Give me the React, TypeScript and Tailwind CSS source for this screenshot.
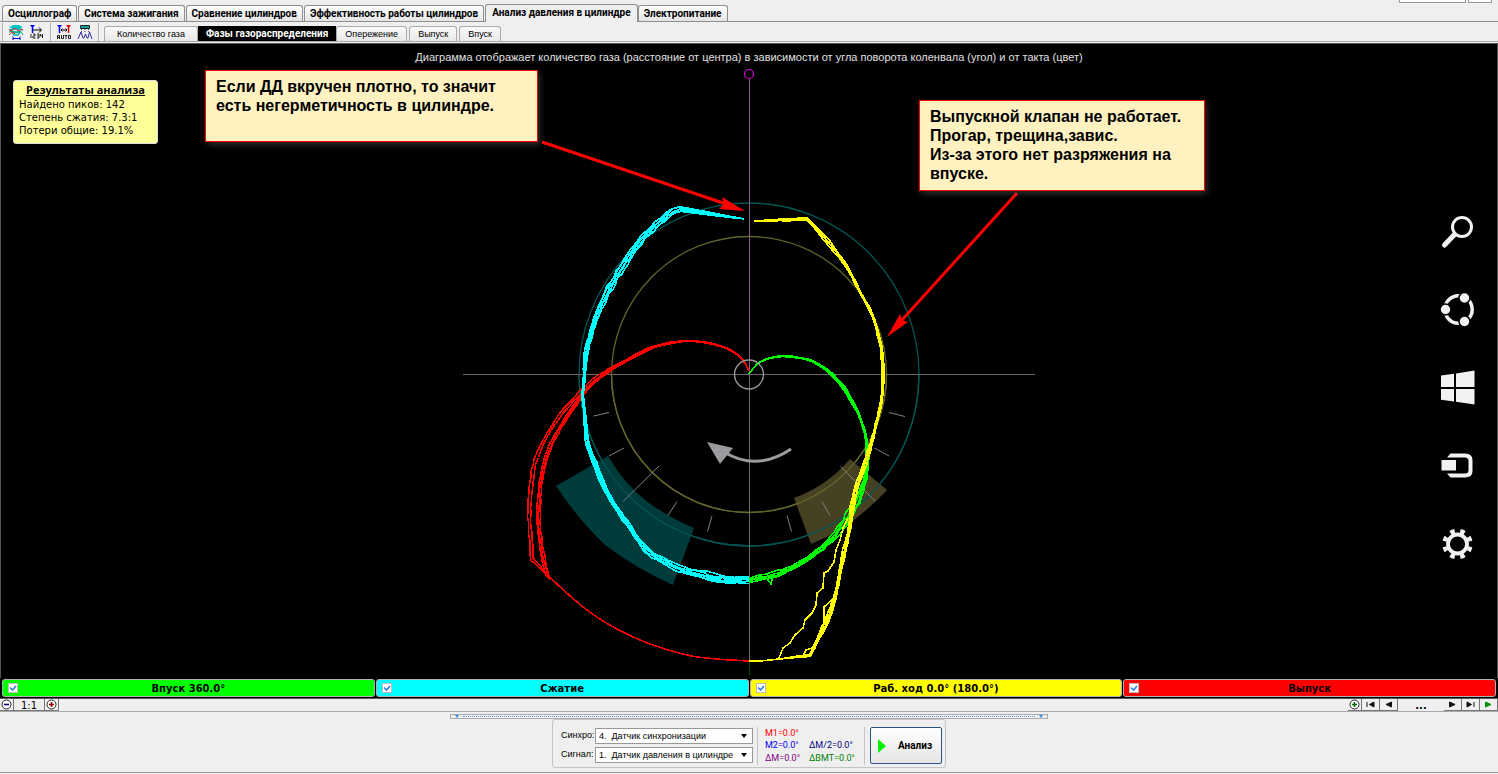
import { type ReactNode } from 'react'

type TracePoint = readonly [x: number, y: number, spread: number]

interface Trace {
  readonly color: string
  readonly seed: number
  readonly count: number
  readonly points: readonly TracePoint[]
}

const CENTER_X = 749
const CENTER_Y = 374

const MAIN_TABS = [
  'Осциллограф',
  'Система зажигания',
  'Сравнение цилиндров',
  'Эффективность работы цилиндров',
  'Анализ давления в цилиндре',
  'Электропитание',
]
const ACTIVE_MAIN_TAB = 'Анализ давления в цилиндре'

const VIEW_TABS = ['Количество газа', 'Фазы газораспределения', 'Опережение', 'Выпуск', 'Впуск']
const ACTIVE_VIEW_TAB = 'Фазы газораспределения'

const STROKES = [
  { label: 'Впуск 360.0°', color: 'bg-[#00ff00]' },
  { label: 'Сжатие', color: 'bg-[#00ffff]' },
  { label: 'Раб. ход 0.0° (180.0°)', color: 'bg-[#ffff00]' },
  { label: 'Выпуск', color: 'bg-[#ff0000]' },
]

const TRACES: readonly Trace[] = [
  {
    color: '#ff0000',
    seed: 3,
    count: 3,
    points: [
      [749, 371, 0], [743, 360, 1], [732, 351, 1], [713, 344, 1], [687, 341, 1], [657, 346, 2], [633, 357, 2],
      [610, 370, 2], [590, 386, 2], [577, 402, 2], [560, 428, 2], [549, 450, 2], [542, 475, 2], [539, 503, 2],
      [539, 527, 2], [542, 550, 2], [547, 573, 2], [550, 579, 0],
    ],
  },
  {
    color: '#ff0000',
    seed: 9,
    count: 2,
    points: [
      [657, 346, 1], [633, 357, 1], [610, 369, 2], [590, 383, 2], [573, 400, 2], [558, 418, 2], [546, 437, 2],
      [538, 453, 2], [532, 477, 2], [530, 503, 2], [529, 515, 2], [531, 540, 2], [532, 559, 2], [532, 559, 2],
      [548, 576, 0],
    ],
  },
  {
    color: '#ff0000',
    seed: 0,
    count: 1,
    points: [
      [546, 573, 0], [558, 585, 0], [583, 607, 0], [603, 621, 0], [623, 632, 0], [650, 644, 0], [687, 655, 0],
      [717, 659, 0], [749, 661, 0],
    ],
  },
  {
    color: '#00ffff',
    seed: 5,
    count: 5,
    points: [
      [744, 219, 0], [680, 209, 3], [680, 209, 3], [673, 211, 3], [657, 224, 3], [640, 241, 3], [628, 258, 3],
      [616, 277, 3], [605, 297, 3], [597, 315, 2], [590, 337, 2], [586, 357, 2], [584, 380, 1], [583, 397, 1],
      [585, 417, 1], [587, 440, 2], [593, 458, 2], [602, 482, 2], [613, 503, 2], [627, 523, 2], [640, 542, 2],
      [653, 555, 3], [678, 568, 3], [703, 576, 3], [723, 580, 3], [749, 580, 3],
    ],
  },
  {
    color: '#00ff00',
    seed: 7,
    count: 4,
    points: [
      [749, 374, 0], [757, 364, 1], [767, 359, 1], [783, 356, 1], [800, 358, 1], [812, 361, 1], [827, 370, 2],
      [840, 383, 2], [850, 398, 2], [858, 413, 1], [865, 433, 1], [867, 447, 2], [867, 463, 2], [865, 480, 2],
      [858, 500, 3], [848, 517, 4], [835, 535, 3], [817, 552, 2], [793, 567, 2], [773, 575, 3], [749, 580, 2],
    ],
  },
  {
    color: '#ffff00',
    seed: 11,
    count: 4,
    points: [
      [754, 221, 0], [780, 220, 1], [807, 219, 1], [807, 219, 1], [828, 242, 2], [847, 267, 1], [860, 292, 1],
      [871, 312, 1], [877, 330, 1], [881, 347, 1], [883, 370, 1], [882, 397, 1], [879, 412, 1], [873, 437, 1],
      [865, 463, 2], [857, 487, 2], [852, 510, 3], [849, 530, 2], [843, 557, 3], [838, 583, 2], [831, 610, 3],
      [822, 630, 3], [810, 655, 1], [803, 656, 1], [779, 659, 0], [760, 661, 0], [749, 661, 0],
    ],
  },
]

// Small repeatable noise so the cycles drift apart the same way on each render.
function noise(seed: number, index: number): number {
  const value = Math.sin(seed * 127.1 + index * 311.7) * 43758.5453
  return (value - Math.floor(value)) * 2 - 1
}

function spline(a: number, b: number, c: number, d: number, t: number): number {
  return 0.5 * (2 * b + (c - a) * t + (2 * a - 5 * b + 4 * c - d) * t * t + (3 * b - a - 3 * c + d) * t * t * t)
}

function buildTrace(trace: Trace, cycle: number): string {
  const { points, count, seed } = trace
  const side = count === 1 ? 0 : (cycle / (count - 1)) * 2 - 1
  const result: string[] = []

  for (let i = 0; i < points.length - 1; i++) {
    const p0 = points[Math.max(0, i - 1)]
    const p1 = points[i]
    const p2 = points[i + 1]
    const p3 = points[Math.min(points.length - 1, i + 2)]
    const length = Math.hypot(p2[0] - p1[0], p2[1] - p1[1])
    const steps = Math.max(1, Math.round(length / 6))
    const straight = length > 50 || length === 0

    for (let s = 0; s <= steps; s++) {
      const t = s / steps
      const x = straight ? p1[0] + (p2[0] - p1[0]) * t : spline(p0[0], p1[0], p2[0], p3[0], t)
      const y = straight ? p1[1] + (p2[1] - p1[1]) * t : spline(p0[1], p1[1], p2[1], p3[1], t)
      const spread = p1[2] + (p2[2] - p1[2]) * t
      const jitter = straight ? 0 : noise(seed + cycle, i * 10 + (s === steps ? 10 : s)) * 0.35
      const shift = spread * (side * 0.9 + jitter)
      const radius = Math.hypot(x - CENTER_X, y - CENTER_Y) || 1
      result.push(
        `${(x + ((x - CENTER_X) / radius) * shift).toFixed(1)},${(y + ((y - CENTER_Y) / radius) * shift).toFixed(1)}`,
      )
    }
  }

  return result.join(' ')
}

function PhaseDiagram() {
  return (
    <svg viewBox="1 44 1496 634" className="block h-auto w-full" role="img" aria-label="Фазы газораспределения">
      <g fill="none" strokeWidth="1.3">
        <ellipse cx="749" cy="374.5" rx="137.5" ry="138" stroke="#62622c" />
        <ellipse cx="749" cy="374.5" rx="170" ry="171.5" stroke="#005555" />
      </g>
      <path
        d="M608 456 L556 486 Q577 518 605 545 Q637 569 673 585 L694 528 Q666 516 645 500 Q623 482 608 456 Z"
        fill="#003b3b"
      />
      <path d="M850 459 L887 490 Q852 528 811 544 L794 498 Q827 486 850 459 Z" fill="#454122" />
      <g fill="none" strokeWidth="1.3">
        <path d="M611.500 374.500 A137.500 138 0 0 0 886.500 374.500" stroke="#66662c" />
        <path d="M579 374.500 A170 171.500 0 0 0 919 374.500" stroke="#005555" />
      </g>

      <path d="M463 374.500 H1035" stroke="#6a6a6a" />
      <path d="M749.500 79 V375" stroke="#85608a" />
      <path d="M749.500 375 V661" stroke="#6a6a6a" />
      <path d="M749.500 661 V675" stroke="#005000" />
      <circle cx="749" cy="74" r="4.500" fill="none" stroke="#e000e0" strokeWidth="1.2" />

      <path
        d="M593.500 416 L609 412.500 M609 456 L624 448 M623 501.500 L659 466 M668 515.500 L677 501.500 M707.500 531.500 L712 516 M905 416.500 L889 412.500 M889 456 L874.500 448 M875 501 L840.500 466.500 M830 515.500 L822 501.500 M791.500 531.500 L787 515.500"
        stroke="#808080"
        fill="none"
      />

      <path d="M724 452 Q757 472 791 449" fill="none" stroke="#9b9b9f" strokeWidth="3" />
      <path d="M707 442 L733 448 L720 464 Z" fill="#9b9b9f" />

      <g fill="none" strokeWidth="1.6" strokeLinejoin="round" shapeRendering="crispEdges">
        {TRACES.map((trace) =>
          Array.from({ length: trace.count }, (_, cycle) => (
            <polyline key={`${trace.seed}-${cycle}`} points={buildTrace(trace, cycle)} stroke={trace.color} />
          )),
        )}
        <path
          d="M848 518 L843 528 L840 540 L836 550 L834 562 L828 571 L824 573 L823 588 L817 593 L816 605 L812 613 L805 620 L803 628 L795 635 L790 643 L783 648 L779 658"
          stroke="#ffff00"
        />
        <path d="M765 576 L771 584 L773 574" stroke="#00ff00" />
        <path d="M832 600 L824 607 L824 622 L829 620 M803 656 L806 650 L812 648" stroke="#ffff00" />
        <path d="M678 569 L707 571 L727 577 L749 578" stroke="#00ffff" />
      </g>
      <circle cx="749" cy="374.500" r="14.500" fill="none" stroke="#999" strokeWidth="1.4" />

      <g stroke="#ff0000" strokeWidth="3">
        <path d="M542 142 L726 204" />
        <path d="M1017 193 L902 320" />
      </g>
      <path d="M745 211 L722 197 L724 204 L719 209 Z" fill="#ff0000" />
      <path d="M887 337 L900 314 L902 320 L908 322 Z" fill="#ff0000" />
    </svg>
  )
}

function Callout({ className, children }: { readonly className: string; readonly children: ReactNode }) {
  return (
    <p
      className={`absolute border border-[#f00] bg-[#fff2c0] px-2.5 py-1.5 text-[16px] leading-[19px] font-bold text-black shadow-[2px_3px_6px_rgba(150,150,150,0.3)] ${className}`}
    >
      {children}
    </p>
  )
}

const CHARMS = [
  {
    label: 'Поиск',
    icon: (
      <>
        <circle cx="22" cy="13" r="9.500" fill="none" stroke="currentColor" strokeWidth="3" />
        <path d="M14.500 20.500 L4.500 31" stroke="currentColor" strokeWidth="5" strokeLinecap="round" />
      </>
    ),
  },
  {
    label: 'Общий доступ',
    icon: (
      <>
        <circle cx="18.500" cy="17.500" r="13.700" fill="none" stroke="currentColor" strokeWidth="3.500" />
        <g fill="currentColor" stroke="#000" strokeWidth="1.500">
          <circle cx="24.500" cy="6" r="5.500" />
          <circle cx="5.500" cy="17.500" r="5.500" />
          <circle cx="24.500" cy="29.500" r="5.500" />
        </g>
      </>
    ),
  },
  {
    label: 'Пуск',
    icon: (
      <path
        d="M1 5.500 L14 3.800 V17 H1 Z M16 3.500 L34.500 0.500 V17 H16 Z M1 19 H14 V31.500 L1 29.800 Z M16 19 H34.500 V34.500 L16 31.800 Z"
        fill="currentColor"
      />
    ),
  },
  {
    label: 'Устройства',
    icon: (
      <>
        <path d="M1.500 12 H16 V22.500 H1.500 Z" fill="currentColor" />
        <path
          d="M7 9.500 L10.500 5.500 H25 Q32.500 5.500 32.500 12 V23 Q32.500 29.500 25 29.500 H10.500 L7 25.500 H25 Q28.500 25.500 28.500 22 V13 Q28.500 9.500 25 9.500 Z"
          fill="currentColor"
        />
      </>
    ),
  },
  {
    label: 'Параметры',
    icon: (
      <g fill="none" stroke="currentColor">
        <circle cx="17.500" cy="18" r="9.500" strokeWidth="3.800" />
        <circle cx="17.500" cy="18" r="13" strokeWidth="4.500" pathLength="80" strokeDasharray="4.400 5.600" strokeDashoffset="-2.800" />
      </g>
    ),
  },
]

function Charms() {
  return (
    <nav className="absolute top-[170px] right-[21px] flex flex-col gap-[42px]">
      {CHARMS.map((charm) => (
        <button key={charm.label} type="button" aria-label={charm.label} className="size-9 text-[#f2f2f2]">
          <svg viewBox="0 0 36 36" className="size-full">
            {charm.icon}
          </svg>
        </button>
      ))}
    </nav>
  )
}

function ToolIcons() {
  return (
    <div className="mr-[5px] flex items-center gap-[5px]">
      <span className="h-[18px] w-px bg-[#b0b0b0]" />
      <button type="button" aria-label="Наложение циклов" className="size-4">
        <svg viewBox="0 0 16 16" className="size-full" fill="none">
          <path d="M1 3 Q4 2 5 1 H11 Q12 2 15 3 L11 5 H5 Z" fill="#00c8c8" />
          <path d="M1 6 L5 5 H11 L15 6 M4 8 H12 L10 11 H6 Z" stroke="#00b0b0" strokeWidth="1.500" />
          <path d="M1 5 L3 7 L7 4 L10 7 L14 5 L15 6 M1 11 L4 8 L7 10" stroke="#e03030" />
          <path d="M1 8 L5 7 L8 9 L12 7 L15 11" stroke="#00a060" />
          <path d="M5 14.500 H12 M5 12.500 V16 M12 12.500 V16" stroke="#0000cc" />
        </svg>
      </button>
      <button type="button" aria-label="Нумерация" className="size-4">
        <svg viewBox="0 0 16 16" className="size-full" fill="none">
          <path d="M1 1 H6 L3.500 4 Z" fill="#0000ff" />
          <path d="M3.500 2 V9" stroke="#0000ff" strokeWidth="1.500" />
          <path d="M4 6 H12 M10 3.500 L12.500 6 L10 8.500" stroke="#000" />
          <path d="M2 10 V14 M4 10 H6 V12 H4 V14 H6.500 M8 10 H10 V14 H8 M8 12 H10 M11.500 10 V12 H14 M13.500 10 V14" stroke="#222" />
        </svg>
      </button>
      <span className="h-[18px] w-px bg-[#b0b0b0]" />
      <button type="button" aria-label="Автоматически" className="size-4">
        <svg viewBox="0 0 16 16" className="size-full" fill="none">
          <path d="M1 1 H6 L3.500 4 Z" fill="#0000ff" />
          <path d="M10 1 H15 L12.500 4 Z" fill="#e00000" />
          <path d="M3.500 2 V9" stroke="#0000ff" strokeWidth="1.500" />
          <path d="M12.500 2 V9" stroke="#e00000" strokeWidth="1.500" />
          <path d="M5 6 H11 M6.500 4.500 L5 6 L6.500 7.500 M9.500 4.500 L11 6 L9.500 7.500" stroke="#000" />
          <path d="M1.500 15 V11.500 H3.500 V15 M1.500 13.500 H3.500 M5.500 11 V14.500 H7.500 V11 M8.500 11.500 H11.500 M10 11.500 V15 M12.500 11.500 H14.500 V14.500 H12.500 Z" stroke="#222" />
        </svg>
      </button>
      <button type="button" aria-label="Форма сигнала" className="size-4">
        <svg viewBox="0 0 16 16" className="size-full" fill="none">
          <path d="M3.500 1.500 H12.500 V4.500 H3.500 Z" fill="#00a0a0" stroke="#222" />
          <path d="M4.500 5 V8 M8 5 V8 M11.500 5 V8" stroke="#555" strokeDasharray="1 1" />
          <path d="M1 15 L4 8 L6 14 H7 L8.500 10 L10 14 H11 L12.500 8 L15 15" stroke="#3030a0" />
        </svg>
      </button>
      <span className="h-[18px] w-px bg-[#b0b0b0]" />
    </div>
  )
}

function MainTabs() {
  return (
    <div
      role="tablist"
      className="flex items-end border-b border-[#8e8e8e] px-0.5 pt-1 font-['Roboto',sans-serif] text-[10px] font-bold"
    >
      {MAIN_TABS.map((tab) => {
        const isActive = tab === ACTIVE_MAIN_TAB
        return (
          <button
            key={tab}
            type="button"
            role="tab"
            aria-selected={isActive}
            className={
              isActive
                ? '-mb-px h-[18px] rounded-t-[3px] border border-b-0 border-[#8e8e8e] bg-[#efefef] px-1.5 pb-0.5 leading-4'
                : 'mr-px h-4 rounded-t-[3px] border border-b-0 border-[#8e8e8e] bg-linear-to-b from-white to-[#e4e4e4] px-[5px] leading-4'
            }
          >
            {tab}
          </button>
        )
      })}
      <div className="ml-auto flex gap-0.5 self-start pr-1">
        <span className="-mt-1 h-[3px] w-[67px] border border-t-0 border-[#999] bg-white" />
        <span className="-mt-1 h-[3px] w-6 border border-t-0 border-[#999] bg-white" />
      </div>
    </div>
  )
}

function ViewTabs() {
  return (
    <div role="tablist" className="flex items-end">
      {VIEW_TABS.map((tab) => {
        const isActive = tab === ACTIVE_VIEW_TAB
        return (
          <button
            key={tab}
            type="button"
            role="tab"
            aria-selected={isActive}
            className={
              isActive
                ? "h-[15px] bg-black px-2 font-['Roboto',sans-serif] text-[10px] leading-[15px] font-bold text-white"
                : 'mr-0.5 h-[15px] rounded-t-[3px] border border-b-0 border-[#aaa] bg-linear-to-b from-[#fafafa] to-[#e8e8e8] px-2 text-[9px] leading-[15px] first:mr-0 first:px-3'
            }
          >
            {tab}
          </button>
        )
      })}
    </div>
  )
}

function StrokeLegend() {
  return (
    <div className="grid grid-cols-4 gap-px border-b border-[#555] bg-black px-0.5 py-px">
      {STROKES.map((stroke) => (
        <label
          key={stroke.label}
          className={`relative flex h-[18px] items-center justify-center rounded-[3px] border border-[#b0b0b0] font-['DejaVu_Sans',sans-serif] text-[10px] font-bold ${stroke.color}`}
        >
          <input type="checkbox" defaultChecked className="peer absolute left-[5px] size-[10px] appearance-none border border-[#bbb] bg-white" />
          <svg viewBox="0 0 10 10" className="pointer-events-none absolute left-[5px] size-[10px] opacity-0 peer-checked:opacity-100">
            <path d="M2 4.500 L4.500 7 L8 3" fill="none" stroke="#2f7fe0" strokeWidth="1.600" />
          </svg>
          {stroke.label}
        </label>
      ))}
    </div>
  )
}

function ZoomIcon({ color, plus }: { readonly color: string; readonly plus: boolean }) {
  return (
    <svg viewBox="0 0 11 11" className="size-[11px]">
      <circle cx="5.500" cy="5.500" r="4.500" fill="#fff" stroke="#222" />
      <path d={plus ? 'M3 5.500 H8 M5.500 3 V8' : 'M3 5.500 H8'} stroke={color} strokeWidth="1.600" />
    </svg>
  )
}

const NAV_BUTTONS = [
  { label: 'В начало', path: 'M2 3 V8 M9 3 V8 L4.500 5.500 Z', color: '#111' },
  { label: 'Назад', path: 'M8.500 3 V8 L3 5.500 Z', color: '#111' },
]

const NAV_BUTTONS_END = [
  { label: 'Вперёд', path: 'M2.500 3 V8 L8 5.500 Z', color: '#111' },
  { label: 'В конец', path: 'M9 3 V8 M2 3 V8 L6.500 5.500 Z', color: '#111' },
  { label: 'Воспроизвести', path: 'M2.500 3 V8 L8 5.500 Z', color: '#009000' },
]

function NavButton({ label, path, color }: (typeof NAV_BUTTONS)[number]) {
  return (
    <button
      type="button"
      aria-label={label}
      className="flex w-[18px] items-center justify-center border-r border-b border-[#777]"
    >
      <svg viewBox="0 0 11 11" className="size-[11px]">
        <path d={path} fill={color} stroke={color} />
      </svg>
    </button>
  )
}

function NavRow() {
  return (
    <div className="flex h-[13px] justify-between border-b border-[#aaa] font-['DejaVu_Sans',sans-serif] text-[10px] leading-[13px]">
      <div className="flex">
        <button type="button" aria-label="Уменьшить" className="flex w-3.5 items-center justify-center border-r border-b border-[#777]">
          <ZoomIcon color="#000080" plus={false} />
        </button>
        <button type="button" className="w-[31px] border-r border-b border-[#777]">
          1:1
        </button>
        <button type="button" aria-label="Увеличить" className="flex w-3.5 items-center justify-center border-r border-b border-[#777]">
          <ZoomIcon color="#900000" plus />
        </button>
      </div>
      <div className="flex">
        <button type="button" aria-label="Добавить метку" className="flex w-3.5 items-center justify-center border-r border-b border-[#777]">
          <ZoomIcon color="#007000" plus />
        </button>
        {NAV_BUTTONS.map((button) => (
          <NavButton key={button.label} {...button} />
        ))}
        <span className="w-[46px] text-center font-bold">...</span>
        {NAV_BUTTONS_END.map((button) => (
          <NavButton key={button.label} {...button} />
        ))}
      </div>
    </div>
  )
}

function ChannelSelect({ id, label, value }: { readonly id: string; readonly label: string; readonly value: string }) {
  return (
    <div className="flex items-center">
      <label htmlFor={id} className="w-[34px]">
        {label}
      </label>
      <div className="relative">
        <select id={id} className="h-4 w-[158px] appearance-none border border-[#999] bg-white pl-[3px] leading-[14px]">
          <option>{value}</option>
        </select>
        <svg viewBox="0 0 6 4" className="pointer-events-none absolute top-1.5 right-1.5 h-1 w-1.5">
          <path d="M0 0 H6 L3 4 Z" fill="#000" />
        </svg>
      </div>
    </div>
  )
}

function ControlPanel() {
  return (
    <div className="mx-auto flex h-[49px] w-[394px] items-center rounded-[3px] border border-[#c4c4c4] pt-1 pl-2 text-[9px]">
      <div className="flex flex-col gap-[3px]">
        <ChannelSelect id="sync" label="Синхро:" value={'4.\u00a0 Датчик синхронизации'} />
        <ChannelSelect id="signal" label="Сигнал:" value={'1.\u00a0 Датчик давления в цилиндре'} />
      </div>
      <div className="ml-1 grid h-[38px] w-[108px] grid-cols-[44px_1fr] border-x border-[#c4c4c4] pl-[7px] font-['Roboto',sans-serif] leading-3">
        <span className="text-[#f00]">M1=0.0°</span>
        <span />
        <span className="text-[#00f]">M2=0.0°</span>
        <span className="text-[#000080]">∆M/2=0.0°</span>
        <span className="text-[#800080]">∆M=0.0°</span>
        <span className="text-[#008000]">∆BMT=0.0°</span>
      </div>
      <button
        type="button"
        className="ml-[5px] flex h-[37px] w-[72px] items-center gap-3 rounded-[2px] border border-[#2a5583] bg-linear-to-b from-white to-[#e6e6e6] pl-[7px] font-['Roboto',sans-serif] text-[10px] font-bold"
      >
        <svg viewBox="0 0 8 14" className="h-3.5 w-2">
          <path d="M0 0 L8 7 L0 14 Z" fill="#00f000" />
        </svg>
        Анализ
      </button>
    </div>
  )
}

function Splitter() {
  return (
    <div className="mx-auto mt-0.5 flex h-[5px] w-[598px] items-center gap-1 border border-[#aaa] px-1">
      <svg viewBox="0 0 4 3" className="h-[3px] w-1">
        <path d="M0 0 H4 L2 3 Z" fill="#2f8fe0" />
      </svg>
      <div className="grow border-t border-dotted border-[#4aa0f0]" />
      <svg viewBox="0 0 4 3" className="h-[3px] w-1">
        <path d="M0 0 H4 L2 3 Z" fill="#2f8fe0" />
      </svg>
    </div>
  )
}

export default function App() {
  return (
    <div className="flex min-h-screen flex-col bg-[#efefef] font-['Liberation_Sans',sans-serif] text-black">
      <MainTabs />
      <div className="flex h-5 items-end border-b border-[#aaa] pl-0.5">
        <ToolIcons />
        <ViewTabs />
      </div>
      <main className="relative mt-px border border-b-0 border-[#555] bg-black">
        <PhaseDiagram />
        <h1 className="absolute inset-x-0 top-1.5 text-center text-[11px] leading-[15px] text-[#e0e0e0]">
          Диаграмма отображает количество газа (расстояние от центра) в зависимости от угла поворота коленвала (угол) и
          от такта (цвет)
        </h1>
        <section className="absolute top-9 left-3 h-16 w-[145px] rounded-[3px] border border-[#ddd] bg-[#ffff99] px-[5px] pt-0.5 font-['DejaVu_Sans',sans-serif] text-[10px] leading-[13px]">
          <h2 className="mb-0.5 text-center font-['Open_Sans',sans-serif] text-[11px] font-bold underline">
            Результаты анализа
          </h2>
          <p>Найдено пиков: 142</p>
          <p>Степень сжатия: 7.3:1</p>
          <p>Потери общие: 19.1%</p>
        </section>
        <Callout className="top-[26px] left-[204px] h-[72px] w-[333px]">
          Если ДД вкручен плотно, то значит
          <br />
          есть негерметичность в цилиндре.
        </Callout>
        <Callout className="top-[56px] left-[918px] h-[91px] w-[286px]">
          Выпускной клапан не работает.
          <br />
          Прогар, трещина,завис.
          <br />
          Из-за этого нет разряжения на
          <br />
          впуске.
        </Callout>
        <Charms />
      </main>
      <StrokeLegend />
      <NavRow />
      <Splitter />
      <ControlPanel />
      <div className="mt-auto mb-px border-t border-[#999]" />
    </div>
  )
}
